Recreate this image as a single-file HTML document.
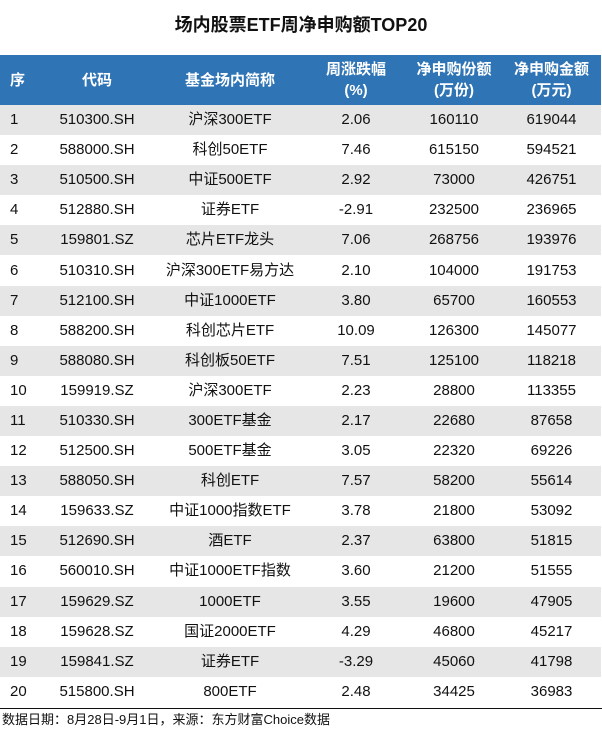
<!DOCTYPE html>
<html><head><meta charset="utf-8"><style>
body{margin:0;width:602px;height:737px;background:#fff;font-family:"Liberation Sans","Noto Sans CJK SC",sans-serif;overflow:hidden}
.t{position:absolute;top:13px;left:0;width:602px;text-align:center;font-weight:bold;font-size:18px;line-height:24px;color:#111}
table{position:absolute;top:55px;left:0;width:601px;border-collapse:collapse;font-size:15px;color:#111;table-layout:fixed}
th{background:#2f74b5;color:#fff;font-weight:bold;height:50px;padding:0;line-height:21px;font-size:15px}
td{height:30.1px;padding:0;text-align:center;line-height:16px;vertical-align:middle}
tr:nth-child(odd) td{background:#e7e6e6}
td:first-child{text-align:left;padding-left:10px}
.f{position:absolute;top:708px;left:0;width:601px;border-top:1px solid #111;font-size:13px;line-height:20px;padding:1px 0 0 2px;color:#111}
</style></head><body>
<div class="t">场内股票ETF周净申购额TOP20</div>
<table>
<colgroup><col style="width:40px"><col style="width:114px"><col style="width:152px"><col style="width:100px"><col style="width:96px"><col style="width:99px"></colgroup>
<thead><tr><th style="text-align:left;padding-left:10px">序</th><th>代码</th><th>基金场内简称</th><th>周涨跌幅<br>(%)</th><th>净申购份额<br>(万份)</th><th>净申购金额<br>(万元)</th></tr></thead>
<tbody>
<tr><td>1</td><td>510300.SH</td><td>沪深300ETF</td><td>2.06</td><td>160110</td><td>619044</td></tr>
<tr><td>2</td><td>588000.SH</td><td>科创50ETF</td><td>7.46</td><td>615150</td><td>594521</td></tr>
<tr><td>3</td><td>510500.SH</td><td>中证500ETF</td><td>2.92</td><td>73000</td><td>426751</td></tr>
<tr><td>4</td><td>512880.SH</td><td>证券ETF</td><td>-2.91</td><td>232500</td><td>236965</td></tr>
<tr><td>5</td><td>159801.SZ</td><td>芯片ETF龙头</td><td>7.06</td><td>268756</td><td>193976</td></tr>
<tr><td>6</td><td>510310.SH</td><td>沪深300ETF易方达</td><td>2.10</td><td>104000</td><td>191753</td></tr>
<tr><td>7</td><td>512100.SH</td><td>中证1000ETF</td><td>3.80</td><td>65700</td><td>160553</td></tr>
<tr><td>8</td><td>588200.SH</td><td>科创芯片ETF</td><td>10.09</td><td>126300</td><td>145077</td></tr>
<tr><td>9</td><td>588080.SH</td><td>科创板50ETF</td><td>7.51</td><td>125100</td><td>118218</td></tr>
<tr><td>10</td><td>159919.SZ</td><td>沪深300ETF</td><td>2.23</td><td>28800</td><td>113355</td></tr>
<tr><td>11</td><td>510330.SH</td><td>300ETF基金</td><td>2.17</td><td>22680</td><td>87658</td></tr>
<tr><td>12</td><td>512500.SH</td><td>500ETF基金</td><td>3.05</td><td>22320</td><td>69226</td></tr>
<tr><td>13</td><td>588050.SH</td><td>科创ETF</td><td>7.57</td><td>58200</td><td>55614</td></tr>
<tr><td>14</td><td>159633.SZ</td><td>中证1000指数ETF</td><td>3.78</td><td>21800</td><td>53092</td></tr>
<tr><td>15</td><td>512690.SH</td><td>酒ETF</td><td>2.37</td><td>63800</td><td>51815</td></tr>
<tr><td>16</td><td>560010.SH</td><td>中证1000ETF指数</td><td>3.60</td><td>21200</td><td>51555</td></tr>
<tr><td>17</td><td>159629.SZ</td><td>1000ETF</td><td>3.55</td><td>19600</td><td>47905</td></tr>
<tr><td>18</td><td>159628.SZ</td><td>国证2000ETF</td><td>4.29</td><td>46800</td><td>45217</td></tr>
<tr><td>19</td><td>159841.SZ</td><td>证券ETF</td><td>-3.29</td><td>45060</td><td>41798</td></tr>
<tr><td>20</td><td>515800.SH</td><td>800ETF</td><td>2.48</td><td>34425</td><td>36983</td></tr>
</tbody></table>
<div class="f">数据日期：8月28日-9月1日，来源：东方财富Choice数据</div>
</body></html>
